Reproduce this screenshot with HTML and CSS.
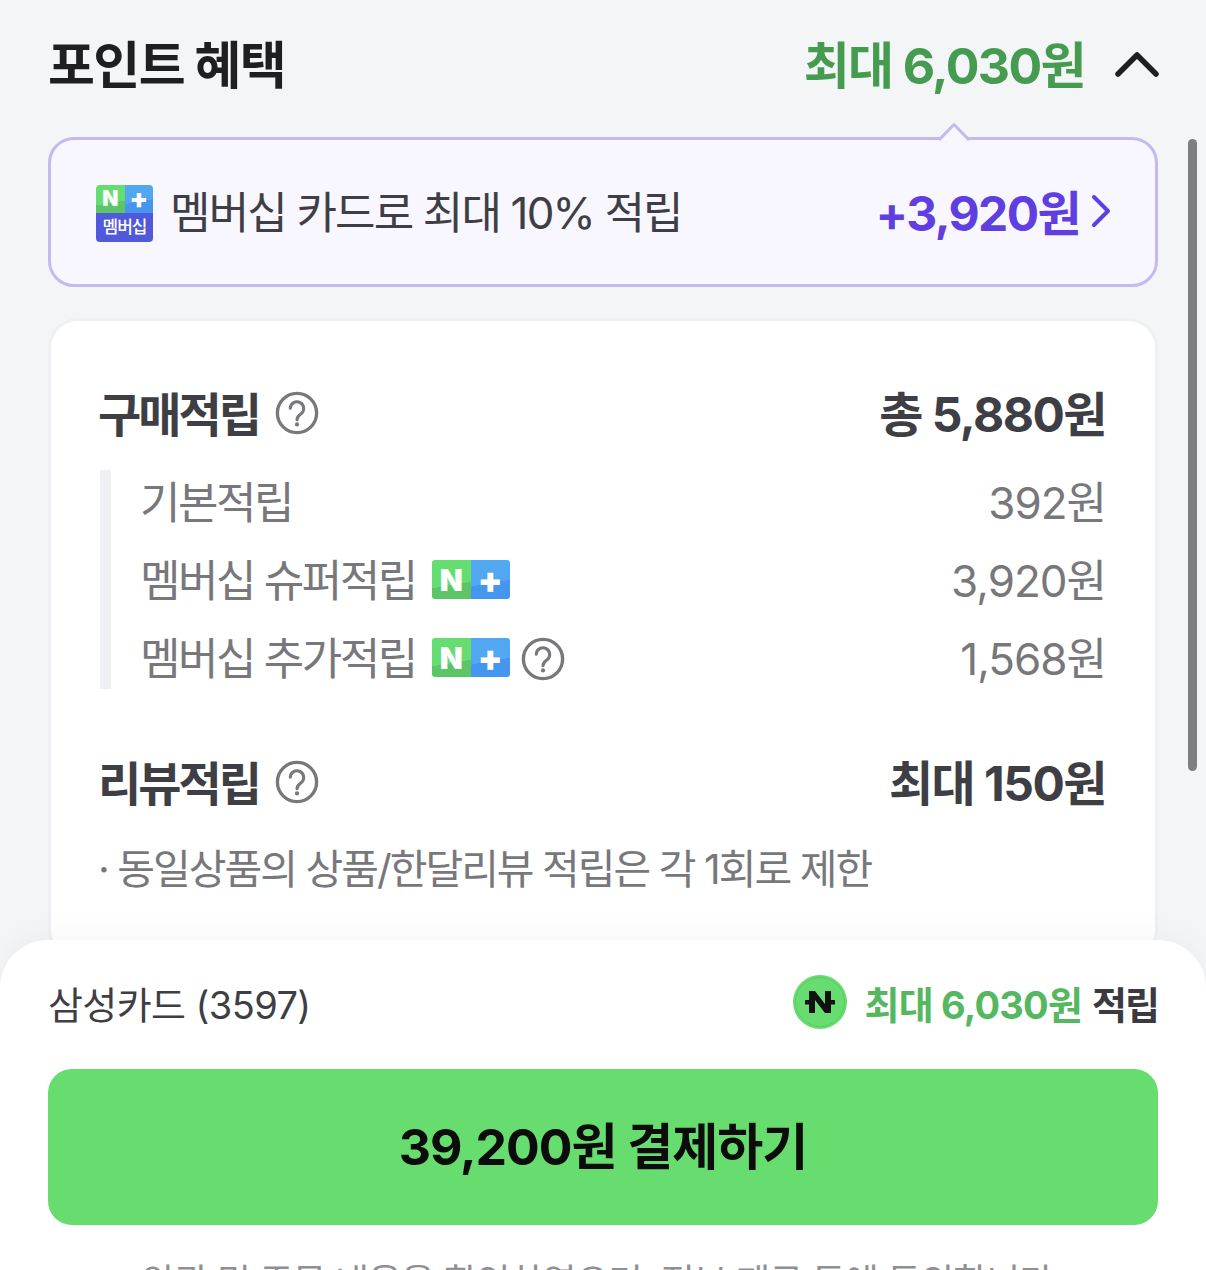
FILE: index.html
```html
<!DOCTYPE html>
<html lang="ko">
<head>
    <meta charset="UTF-8">
    <meta name="viewport" content="width=device-width, initial-scale=1.0">
    <title>포인트 혜택</title>
    <link rel="stylesheet" href="styles.css">
</head>
<body>
    <div class="page">
        <div class="benefitHead">
            <h2>포인트 혜택</h2>
            <div class="headRight">
                <span class="headTotal">최대 6,030원</span>
                <svg class="chevUp" width="44" height="28" viewBox="0 0 44 28"><path d="M3 24 L22 5 L41 24" fill="none" stroke="#1e1e23" stroke-width="5.5" stroke-linecap="round" stroke-linejoin="round"/></svg>
            </div>
        </div>

        <div class="memberBox">
            <svg class="boxArrow" width="30" height="19" viewBox="0 0 30 19"><path d="M0 18 L15 2.5 L30 18" fill="#f8f7ff" stroke="#c5b9f1" stroke-width="3" stroke-linejoin="round"/></svg>
            <div class="memberLeft">
                <div class="memberBadge">
                    <div class="badgeTop">
                        <span class="tileN">N</span>
                        <span class="tilePlus">+</span>
                    </div>
                    <div class="badgeBottom">멤버십</div>
                </div>
                <span class="memberText">멤버십 카드로 최대 10% 적립</span>
            </div>
            <div class="memberRight">
                <span class="memberAmount">+3,920원</span>
                <svg class="chevRight" width="20" height="34" viewBox="0 0 20 34"><path d="M3 3 L17 17 L3 31" fill="none" stroke="#5f3fe0" stroke-width="4" stroke-linecap="round" stroke-linejoin="round"/></svg>
            </div>
        </div>

        <div class="pointCard">
            <div class="pointRow">
                <div class="rowLabel">구매적립
                    <svg class="help" width="44" height="44" viewBox="0 0 46 46"><circle cx="23" cy="23" r="20.5" fill="none" stroke="#77777c" stroke-width="3.5"/><path d="M16 18 a7 7 0 1 1 11 6 c-3 2 -4 3 -4 6" fill="none" stroke="#77777c" stroke-width="3.2" stroke-linecap="round"/><circle cx="23" cy="35" r="2.2" fill="#77777c"/></svg>
                </div>
                <div class="rowValue">총 5,880원</div>
            </div>
            <div class="subList">
                <div class="subRow">
                    <div class="subLabel">기본적립</div>
                    <div class="subValue">392원</div>
                </div>
                <div class="subRow">
                    <div class="subLabel">멤버십 슈퍼적립
                        <span class="nplus"><span class="tileN">N</span><span class="tilePlus">+</span></span>
                    </div>
                    <div class="subValue">3,920원</div>
                </div>
                <div class="subRow">
                    <div class="subLabel">멤버십 추가적립
                        <span class="nplus"><span class="tileN">N</span><span class="tilePlus">+</span></span>
                        <svg class="helpSmall" width="44" height="44" viewBox="0 0 46 46"><circle cx="23" cy="23" r="20.5" fill="none" stroke="#77777c" stroke-width="3.5"/><path d="M16 18 a7 7 0 1 1 11 6 c-3 2 -4 3 -4 6" fill="none" stroke="#77777c" stroke-width="3.2" stroke-linecap="round"/><circle cx="23" cy="35" r="2.2" fill="#77777c"/></svg>
                    </div>
                    <div class="subValue">1,568원</div>
                </div>
            </div>
            <div class="pointRow reviewRow">
                <div class="rowLabel">리뷰적립
                    <svg class="help" width="44" height="44" viewBox="0 0 46 46"><circle cx="23" cy="23" r="20.5" fill="none" stroke="#77777c" stroke-width="3.5"/><path d="M16 18 a7 7 0 1 1 11 6 c-3 2 -4 3 -4 6" fill="none" stroke="#77777c" stroke-width="3.2" stroke-linecap="round"/><circle cx="23" cy="35" r="2.2" fill="#77777c"/></svg>
                </div>
                <div class="rowValue">최대 150원</div>
            </div>
            <p class="reviewNote">· 동일상품의 상품/한달리뷰 적립은 각 1회로 제한</p>
        </div>
    </div>

    <div class="scrollThumb"></div>

    <div class="paySheet">
        <div class="payInfo">
            <span class="cardName">삼성카드 (3597)</span>
            <div class="payPoint">
                <svg width="54" height="54" viewBox="0 0 54 54"><circle cx="27" cy="27" r="27" fill="#67dc70"/><circle cx="27" cy="27" r="24.5" fill="none" stroke="#5ccb66" stroke-width="1"/><path d="M16 16 H22 L32 29 V16 H38 V38 H32 L22 25 V38 H16 Z" fill="#111"/><rect x="12" y="25" width="4" height="4.5" fill="#111"/><rect x="38" y="25" width="4" height="4.5" fill="#111"/></svg>
                <span class="pointGreen">최대 6,030원</span>
                <span class="pointDark">적립</span>
            </div>
        </div>
        <button class="payBtn" type="button">39,200원 결제하기</button>
        <p class="agree">약관 및 주문 내용을 확인하였으며, 정보 제공 등에 동의합니다</p>
    </div>
</body>
</html>
```

FILE: styles.css
```css
html, body {
    margin: 0;
    padding: 0;
    height: 1270px;
    overflow: hidden;
}

body {
    font-family: Inter, "Noto Sans CJK KR", sans-serif;
    background-color: #f4f5f7;
    position: relative;
}

.page {
    padding: 0 48px;
    display: flex;
    flex-direction: column;
}

.benefitHead {
    height: 137px;
    padding-bottom: 14px;
    box-sizing: border-box;
    display: flex;
    justify-content: space-between;
    align-items: center;
}

h2 {
    margin: 0;
    font-size: 51px;
    font-weight: 700;
    letter-spacing: -1.6px;
    color: #1e1e23;
}

.headRight {
    display: flex;
    align-items: center;
    gap: 30px;
}

.headTotal {
    font-size: 50px;
    font-weight: 700;
    letter-spacing: -1.6px;
    color: #459c50;
}

.chevUp {
    margin: 4px -1px 0 0;
}

.memberBox {
    position: relative;
    height: 150px;
    box-sizing: border-box;
    padding: 0 44px 4px 45px;
    border: 3px solid #c5b9f1;
    border-radius: 26px;
    background-color: #f8f7ff;
    display: flex;
    justify-content: space-between;
    align-items: center;
}

.boxArrow {
    position: absolute;
    top: -18px;
    right: 186px;
}

.memberLeft {
    display: flex;
    align-items: center;
    gap: 17px;
}

.memberBadge {
    width: 57px;
    height: 57px;
    margin-top: 6px;
    display: flex;
    flex-direction: column;
}

.badgeTop {
    display: flex;
    height: 28px;
}

.badgeTop .tileN {
    font-size: 21px;
    border-radius: 4px 0 0 0;
}

.badgeTop .tilePlus {
    font-size: 27px;
    border-radius: 0 4px 0 0;
}

.badgeBottom {
    flex: 1;
    background-color: #5059d9;
    border-radius: 0 0 4px 4px;
    color: #fff;
    font-size: 17px;
    font-weight: 500;
    letter-spacing: -1px;
    text-align: center;
    line-height: 28px;
}

.tileN, .tilePlus {
    flex: 1;
    display: flex;
    align-items: center;
    justify-content: center;
    color: #fff;
    font-weight: 900;
    line-height: 1;
}

.tileN {
    background: linear-gradient(170deg, #66dd70 62%, #5bc568 62%);
    border-radius: 3px 0 0 3px;
}

.tilePlus {
    background: linear-gradient(170deg, #52a8f0 58%, #4596ee 58%);
    border-radius: 0 3px 3px 0;
    font-size: 36px;
}

.memberText {
    font-size: 44px;
    letter-spacing: -1.85px;
    color: #3e3e44;
}

.memberRight {
    display: flex;
    align-items: center;
    gap: 11px;
}

.memberAmount {
    font-size: 48px;
    font-weight: 700;
    letter-spacing: -1.6px;
    color: #5f3fe0;
}

.chevRight {
    margin-top: 2px;
}

.pointCard {
    margin-top: 31px;
    height: 642px;
    box-sizing: border-box;
    padding: 58px 49px 0 47px;
    background-color: #fff;
    border: 3px solid #eff0f3;
    border-radius: 30px;
}

.pointRow {
    display: flex;
    justify-content: space-between;
    align-items: center;
    height: 64px;
}

.rowLabel {
    display: flex;
    align-items: center;
    gap: 16px;
    font-size: 47px;
    font-weight: 700;
    letter-spacing: -3px;
    color: #3e3e45;
}

.help {
    margin-top: 4px;
}

.rowValue {
    font-size: 48px;
    font-weight: 700;
    letter-spacing: -1.5px;
    color: #3e3e45;
}

.subList {
    margin: 27px 0 0 2px;
    padding-left: 29px;
    border-left: 11px solid #eff0f3;
    display: flex;
    flex-direction: column;
    gap: 15px;
}

.subRow {
    display: flex;
    justify-content: space-between;
    align-items: center;
    height: 63px;
    box-sizing: border-box;
    padding-bottom: 4px;
}

.subLabel {
    display: flex;
    align-items: center;
    gap: 16px;
    font-size: 44px;
    letter-spacing: -2.5px;
    color: #77777c;
}

.subValue {
    font-size: 44px;
    letter-spacing: -1px;
    color: #77777c;
}

.nplus {
    display: flex;
    width: 78px;
    height: 39px;
    margin-top: 4px;
    font-size: 30px;
    letter-spacing: 0;
}

.helpSmall {
    margin: 6px 0 0 -5px;
}

.reviewRow {
    margin-top: 59px;
}

.reviewNote {
    margin: 24px 0 0;
    font-size: 41px;
    letter-spacing: -2px;
    color: #77777c;
}

.scrollThumb {
    position: absolute;
    left: 1188px;
    top: 139px;
    width: 9px;
    height: 632px;
    border-radius: 5px;
    background-color: #7f7f82;
}

.paySheet {
    position: absolute;
    left: 0;
    right: 0;
    top: 940px;
    height: 330px;
    box-sizing: border-box;
    padding: 0 48px;
    background-color: #fff;
    border-radius: 48px 48px 0 0;
    box-shadow: 0 -6px 30px rgba(0, 0, 0, 0.035);
}

.payInfo {
    height: 129px;
    padding-bottom: 5px;
    box-sizing: border-box;
    display: flex;
    justify-content: space-between;
    align-items: center;
}

.cardName {
    font-size: 38px;
    letter-spacing: -0.6px;
    color: #3e3e44;
}

.payPoint {
    display: flex;
    align-items: center;
    font-size: 38px;
    font-weight: 700;
    letter-spacing: -0.8px;
}

.payPoint svg {
    margin-right: 17px;
}

.pointGreen {
    color: #55b860;
    margin-right: 10px;
}

.pointDark {
    color: #3a3a40;
    letter-spacing: -2px;
}

.payBtn {
    display: block;
    width: 100%;
    height: 156px;
    padding: 0 0 8px;
    border: none;
    border-radius: 24px;
    background-color: #67dd70;
    color: #0c0c0c;
    font-family: inherit;
    font-size: 50px;
    font-weight: 700;
    letter-spacing: -1px;
    cursor: pointer;
}

.agree {
    margin: 28px 0 0;
    padding-right: 12px;
    text-align: center;
    font-size: 37px;
    letter-spacing: -1px;
    color: #909094;
    white-space: nowrap;
}
```
